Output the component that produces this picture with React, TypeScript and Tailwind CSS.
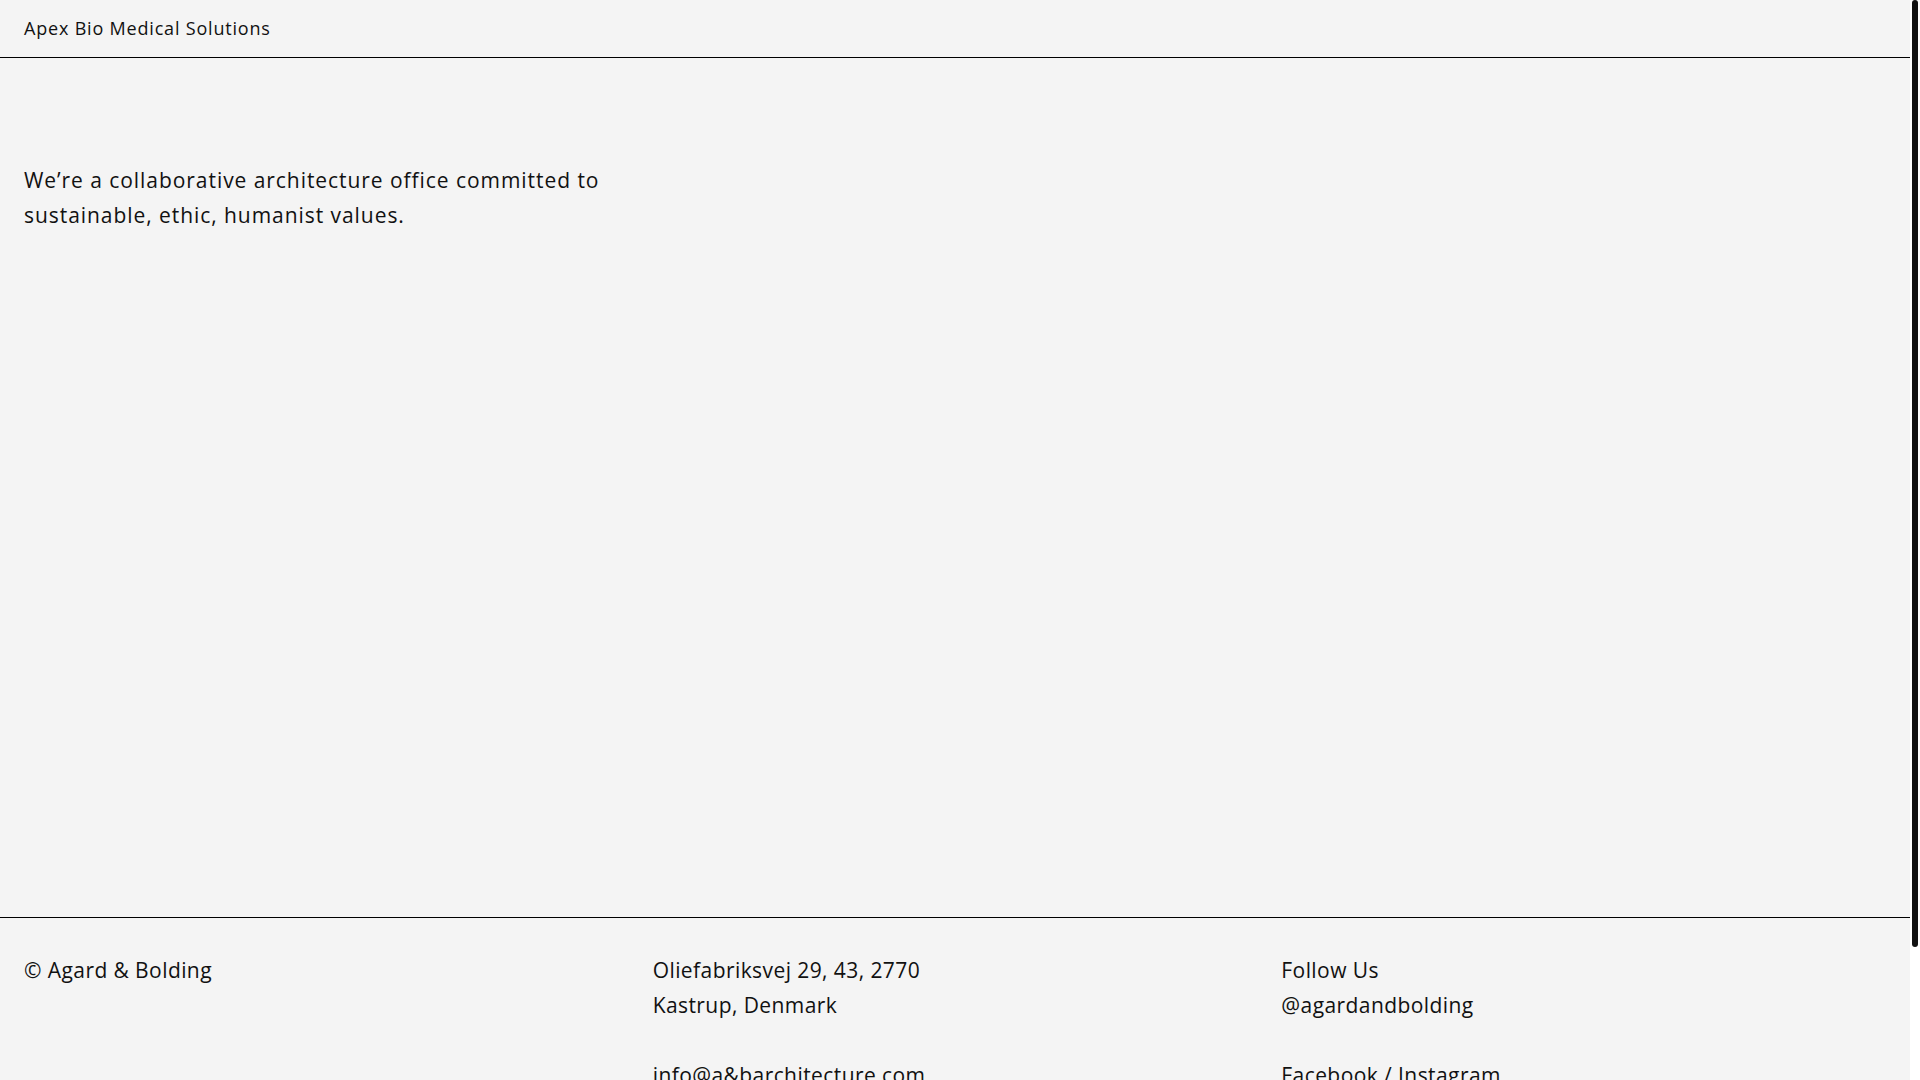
export default function App() {
  return (
    <div
      className="min-h-screen bg-white text-[#111]"
      style={{ fontFamily: "'Open Sans', Roboto, 'Liberation Sans', sans-serif" }}
    >
      <div className="mr-[10px] bg-[#f4f4f4]">
        <header className="flex h-[58px] items-center border-b border-black px-6 text-[18px] tracking-[0.045em]">
          Apex Bio Medical Solutions
        </header>

        <main className="h-[859px] px-6 pt-[105px]">
          <p className="max-w-[640px] text-[21px] leading-[35px] tracking-[0.045em]">
            We’re a collaborative architecture office committed to sustainable, ethic, humanist values.
          </p>
        </main>

        <footer className="grid grid-cols-3 gap-6 border-t border-black px-6 pt-[35px] pb-[100px] text-[21px] leading-[35px] tracking-[0.02em]">
          <div>© Agard &amp; Bolding</div>
          <div>
            <p>Oliefabriksvej 29, 43, 2770</p>
            <p>Kastrup, Denmark</p>
            <p className="mt-[35px]">info@a&amp;barchitecture.com</p>
            <p>+45 31 41 59 26</p>
          </div>
          <div>
            <p>Follow Us</p>
            <p>@agardandbolding</p>
            <p className="mt-[35px]">Facebook / Instagram</p>
          </div>
        </footer>
      </div>

      {/* scrollbar thumb */}
      <div className="fixed top-0 right-[2px] h-[947px] w-[6px] rounded-full bg-[#111]" />
    </div>
  );
}
